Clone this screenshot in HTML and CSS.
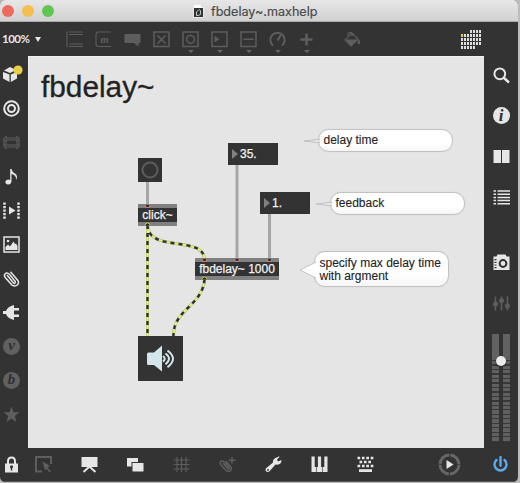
FILE: index.html
```html
<!DOCTYPE html>
<html lang="en">
<head>
<meta charset="utf-8">
<title>fbdelay~.maxhelp</title>
<link rel="stylesheet" href="styles.css">
</head>
<body>
<div class="window">
  <header class="titlebar">
    <div class="lights"><i class="light close"></i><i class="light minimize"></i><i class="light expand"></i></div>
    <div class="doc-title">
      <svg width="11" height="14" viewBox="0 0 11 14"><path d="M0 0H8L11 3V14H0Z" fill="#fafafa" stroke="#bbb" stroke-width=".5"/><path d="M8 0V3H11" fill="#ddd"/><rect x="1" y="4" width="9" height="9" fill="#333"/><path d="M3.500 11.500V8L6 5.500L7.500 6.500V10.500L5 11.500Z" fill="none" stroke="#b9c5c6"/></svg>
      <span>fbdelay~.maxhelp</span>
    </div>
  </header>

  <nav class="toolbar">
    <div class="zoom-level"><span>100%</span><svg width="6" height="5" viewBox="0 0 6 5"><path d="M0 0H6L3 5Z" fill="#e6e6e6"/></svg></div>
    <div class="tools dim">
      <div class="tool"><svg width="17" height="17" viewBox="0 0 17 17"><path d="M1 .5V16M3 1H17M3 3.500H17M3 13H17M3 15.500H17" class="line thin"/></svg></div>
      <div class="tool"><svg width="17" height="17" viewBox="0 0 17 17"><path d="M16 1H3.500Q1 1 1 3.500V13Q1 15.500 3.500 15.500H16" class="line thin"/><text x="9.500" y="11.500" class="glyph-m">m</text></svg></div>
      <div class="tool"><svg width="17" height="17" viewBox="0 0 17 17"><path d="M.5 3H16.500V12H14.500V15.500L10 12H.5Z" class="fill"/></svg></div>
      <div class="tool"><svg width="17" height="17" viewBox="0 0 17 17"><path d="M1 1H16V15.500H1ZM4.500 4.500L12.500 12.500M12.500 4.500L4.500 12.500" class="line"/></svg></div>
      <div class="tool drop"><svg width="17" height="17" viewBox="0 0 17 17"><path d="M1 1H16V15.500H1Z" class="line"/><circle cx="8.500" cy="8.300" r="3.900" class="line"/></svg></div>
      <div class="tool drop"><svg width="17" height="17" viewBox="0 0 17 17"><path d="M1 1H16V15.500H1Z" class="line"/><path d="M3.500 5L8.500 8.300L3.500 11.500Z" class="fill"/></svg></div>
      <div class="tool drop"><svg width="17" height="17" viewBox="0 0 17 17"><path d="M1 1H16V15.500H1ZM3.500 8.300H13.500" class="line"/></svg></div>
      <div class="tool drop"><svg width="17" height="17" viewBox="0 0 17 17"><path d="M4 14.500A7.200 7.200 0 1 1 13 14.500M8.500 9.500L11.800 4" class="line bold"/></svg></div>
      <div class="tool drop"><svg width="17" height="17" viewBox="0 0 17 17"><path d="M8.500 2.500V14.500M2.500 8.500H14.500" class="line heavy"/></svg></div>
    </div>
    <svg class="bucket dim" width="17" height="17" viewBox="0 0 17 17"><path d="M1 9L8 2L14 8L7 15ZM4 5V2.500Q6 .2 8 2.500V5" class="line thin"/><path d="M1.500 8.500H14L7 15ZM14.700 8Q18 13 14.700 13Q12 13 14.700 8" class="fill"/></svg>
    <svg class="calendar" width="21" height="20" viewBox="0 0 21 20">
      <g fill="none" stroke="#dedede" stroke-width="3" stroke-dasharray="2 1"><path d="M9 1.500H21M3 5.500H21M0 9.500H21M0 13.500H21M0 17.500H15"/></g><path d="M0 4H2V7H0Z" fill="#f2d21f"/>
    </svg>
  </nav>

  <aside class="left">
    <div class="cell"><svg class="package" width="22" height="20" viewBox="0 0 22 20"><path d="M1 8L7.500 10.500V18L1 14.500ZM8.800 10.500L15 8V14.500L8.800 18ZM2 6.500L8 3L14 6L8 9Z" fill="#e6e6e6"/><circle cx="16" cy="6" r="4.600" fill="#e8cf45"/></svg></div>
    <div class="cell"><svg width="17" height="17" viewBox="0 0 17 17"><circle cx="8.500" cy="8.500" r="7.300" class="line bold"/><circle cx="8.500" cy="8.500" r="3.500" class="line bold"/></svg></div>
    <div class="cell dim"><svg width="17" height="15" viewBox="0 0 17 15"><path d="M1 3H16V12H1ZM3 5V10M14 5V10M1 5H16M1 10H16M2 1.700H4M13 1.700H15M2 13.300H4M13 13.300H15" class="line thin"/></svg></div>
    <div class="cell"><svg width="17" height="17" viewBox="0 0 17 17"><path d="M7.200 1H8.500Q9 4 12 5.500Q15.500 8 13 12Q13.500 7 8.500 6V13Q8 17 4.500 16.500Q1 15 3 12.500Q5 11 7.200 12Z" fill="#e6e6e6"/></svg></div>
    <div class="cell"><svg width="17" height="17" viewBox="0 0 17 17"><path d="M1.500 .5V17M15.500 .5V17" stroke="#e6e6e6" stroke-width="2.500" stroke-dasharray="2.200 1.300"/><path d="M6 4.500L12.500 8.500L6 12.500Z" fill="#e6e6e6"/></svg></div>
    <div class="cell"><svg width="17" height="17" viewBox="0 0 17 17"><path d="M1 1H16V16H1Z" class="line"/><circle cx="5" cy="5" r="1.300" class="fill"/><path d="M2.500 14V11L5 8.500L7 10.500L10.500 5.500L12 8L13 7.500L14.500 10V14Z" class="fill"/></svg></div>
    <div class="cell"><svg width="17" height="17" viewBox="0 0 17 17"><path d="M4 5L10.500 13Q12.300 14.200 12.300 11.500L6.500 4.200Q3.800 1.800 2 4Q.7 5.500 2.200 7.500L8.800 14.800Q12.300 17 14.500 14.800Q16.500 12.500 14.500 10L7.500 1.800" class="line"/></svg></div>
    <div class="cell"><svg width="17" height="17" viewBox="0 0 17 17"><path d="M0 7H3Q4.500 2.500 11 1V4H16V6.500H11V10.500H16V13H11V16Q4.500 14.500 3 10H0Z" class="fill"/></svg></div>
    <div class="cell"><span class="letter">v</span></div>
    <div class="cell"><span class="letter">b</span></div>
    <div class="cell dim"><svg width="17" height="17" viewBox="0 0 17 17"><path d="M8.500 .5L10.500 6.300H16.500L11.700 10L13.500 16L8.500 12.400L3.500 16L5.300 10L.5 6.300H6.500Z" class="fill"/></svg></div>
  </aside>

  <main class="patcher">
    <svg class="cords" width="456" height="391" viewBox="28 57 456 391">
      <g fill="none" stroke="#a6a6a6" stroke-width="3"><path d="M147.500 182V205M237 165V259M269.500 214V259"/></g>
      <g fill="none" stroke="#a7b46f" stroke-width="3"><path d="M147.500 225V336M147.500 225C148 253 203 235 204.500 259M204.500 279C203 306 173 309 173.500 336"/></g>
      <g fill="none" stroke="#dff47f" stroke-width="2"><path d="M147.500 225V336M147.500 225C148 253 203 235 204.500 259M204.500 279C203 306 173 309 173.500 336"/></g>
      <g fill="none" stroke="#303030" stroke-width="2.400" stroke-dasharray="4 4"><path d="M147.500 225V336M147.500 225C148 253 203 235 204.500 259M204.500 279C203 306 173 309 173.500 336"/></g>
    </svg>
    <h1 class="node heading">fbdelay~</h1>
    <div class="node button"><svg width="24" height="24" viewBox="0 0 24 24"><circle cx="12" cy="12" r="7.500" fill="none" stroke="#5c5c5c" stroke-width="2"/></svg></div>
    <div class="node number delay-value"><svg width="6" height="10" viewBox="0 0 6 10"><path d="M0 0L6 5L0 10Z" fill="#808080"/></svg><span>35.</span></div>
    <div class="node number feedback-value"><svg width="6" height="10" viewBox="0 0 6 10"><path d="M0 0L6 5L0 10Z" fill="#808080"/></svg><span>1.</span></div>
    <div class="node object click">click~</div>
    <div class="node object fbdelay">fbdelay~ 1000</div>
    <div class="node dac"><svg width="45" height="45" viewBox="0 0 45 45"><path d="M9 18Q9 16.500 10.500 16.500H16L24 9.500V35.500L16 29H10.500Q9 29 9 27.500Z" fill="#d2e6eb"/><g fill="none" stroke="#d2e6eb" stroke-width="2"><path d="M25 20Q28.500 22.800 25 25.600M27.500 17.500Q34.500 22.800 27.500 28.200M29.500 14.500Q40.500 22.800 29.500 31.300"/></g></svg></div>
    <svg class="cords ports" width="456" height="391" viewBox="28 57 456 391">
      <g fill="#282828" stroke="#e58a7c" stroke-width="1"><path d="M145 205A2.500 2.500 0 0 0 150 205M202 259A2.500 2.500 0 0 0 207 259M234.500 259A2.500 2.500 0 0 0 239.500 259M267 259A2.500 2.500 0 0 0 272 259"/></g>
      <g fill="#282828" stroke="#bdc951" stroke-width="1"><path d="M145 225.500A2.500 2.500 0 0 1 150 225.500M202 279.500A2.500 2.500 0 0 1 207 279.500"/></g>
    </svg>
    <div class="node bubble delay-note">delay time<svg class="tail" width="16" height="6" viewBox="0 0 16 6"><path d="M16 1.500H13L0 3L13 4.500H16" fill="#e8e8e8" stroke="#c2c2c2"/></svg></div>
    <div class="node bubble feedback-note">feedback<svg class="tail" width="16" height="6" viewBox="0 0 16 6"><path d="M16 1.500H13L0 3L13 4.500H16" fill="#e8e8e8" stroke="#c2c2c2"/></svg></div>
    <div class="node bubble max-note">specify max delay time<br>with argment<svg class="tail" width="17" height="16" viewBox="0 0 17 16"><path d="M17 .5H16L1 8L16 15.500H17" fill="#fff" stroke="#c2c2c2"/></svg></div>
  </main>

  <aside class="right">
    <div class="cell"><svg width="17" height="17" viewBox="0 0 17 17"><circle cx="6.800" cy="6.800" r="5.400" class="line bold"/><path d="M10.500 10.500L16 15.500" class="line heavy"/></svg></div>
    <div class="cell"><span class="letter info">i</span></div>
    <div class="cell"><svg width="17" height="17" viewBox="0 0 17 17"><path d="M.5 2H8V15H.5ZM9 2H16.500V15H9Z" class="fill"/></svg></div>
    <div class="cell"><svg width="17" height="17" viewBox="0 0 17 17"><path d="M.5 2H3M4.500 2H17M.5 5.200H3M4.500 5.200H17M.5 8.400H3M4.500 8.400H17M.5 11.600H3M4.500 11.600H17M.5 14.800H3M4.500 14.800H17" class="line"/></svg></div>
    <div class="cell camera"><svg width="17" height="17" viewBox="0 0 17 17"><path d="M3.500 2.500L4.500 .5H12.500L13.500 2.500H16.500V16H.5V2.500Z" class="fill"/><circle cx="10" cy="9.500" r="3.400" fill="#e6e6e6" stroke="#303030" stroke-width="2"/><path d="M2.500 5V15" stroke="#303030" stroke-width="2" stroke-dasharray="1.200 1.500"/></svg></div>
    <div class="cell dim"><svg width="17" height="17" viewBox="0 0 17 17"><path d="M2.500 1.500V15.500M8.500 1.500V15.500M14.500 1.500V15.500" class="line"/><circle cx="2.500" cy="9" r="2.500" class="fill"/><circle cx="8.500" cy="5.500" r="2.500" class="fill"/><circle cx="14.500" cy="11" r="2.500" class="fill"/></svg></div>
    <div class="meter"><i class="channel"></i><i class="channel"></i><i class="knob"></i></div>
  </aside>

  <footer class="bottombar">
    <div class="cell lock"><svg width="15" height="18" viewBox="0 0 15 18"><path d="M4 8V5.500Q4 1.500 7.500 1.500T11 5.500V8" class="line bold"/><path d="M1 7.500H14V16.500H1Z" class="fill"/><circle cx="7.500" cy="10.700" r="1.500" fill="#303030"/><path d="M6.800 11H8.200V14.500H6.800Z" fill="#303030"/></svg></div>
    <div class="slots">
      <div class="slot dim"><svg width="17" height="17" viewBox="0 0 17 17"><path d="M7 15.500H1V1H16V8" class="line bold"/><path d="M7.500 5.500L15 10L12.500 11.500L16 15.500L14.800 16.500L11.500 12.700L10 14.500Z" class="fill"/></svg></div>
      <div class="slot"><svg width="17" height="17" viewBox="0 0 17 17"><path d="M.5 1H16.500V11H.5Z" class="fill"/><path d="M8.500 10.500L2.500 16M8.500 10.500L14.500 16" class="line bold"/></svg></div>
      <div class="slot"><svg width="17" height="17" viewBox="0 0 17 17"><path d="M0 2H11V6H4.500V10.500H0Z" class="fill"/><path d="M5.500 7H16.500V15.500H5.500Z" class="fill"/></svg></div>
      <div class="slot dim"><svg width="17" height="17" viewBox="0 0 17 17"><path d="M4 1V16M8.500 1V16M13 1V16M.5 4H16.500M.5 8.500H16.500M.5 13H16.500" class="line thin"/></svg></div>
      <div class="slot dim"><svg width="17" height="17" viewBox="0 0 17 17"><path d="M4 7L9 13Q10.500 13.500 10 11.500L5.500 6Q3 4 1.500 6Q.5 7.500 2 9L7 14.500Q9.500 16.500 11.700 14.500Q13 12.500 11.500 10.500L7 5.200M13 1V7.500M9.700 4.200H16.500" class="line"/></svg></div>
      <div class="slot"><svg width="17" height="17" viewBox="0 0 17 17"><path d="M11.500 1.500Q15 0 14.500 1L12 3.500L13 5.500L16.500 4Q16.500 9.500 10.500 8.500L5 14.700Q3 17 1 15.200Q-.5 13 2 11.500L8 6.500Q7.500 3 11.500 1.500Z" class="fill"/><circle cx="3" cy="14" r=".9" fill="#303030"/></svg></div>
      <div class="slot"><svg width="17" height="17" viewBox="0 0 17 17"><path d="M.5 .5H3.700V11H5.400V16H.5ZM6.900 .5H10.100V11H11.100V16H6V11H6.900ZM13.300 .5H16.500V16H11.700V11H13.300Z" class="fill"/></svg></div>
      <div class="slot"><svg width="17" height="17" viewBox="0 0 17 17"><path d="M.5 2H17M.5 10H17" stroke="#e6e6e6" stroke-width="2.600" stroke-dasharray="2.700 1.700"/><path d="M2.500 6H15" stroke="#e6e6e6" stroke-width="2.600" stroke-dasharray="2.700 1.700"/><path d="M2 13.200H15V16H2Z" class="fill"/></svg></div>
    </div>
    <div class="play"><svg width="23" height="23" viewBox="0 0 23 23"><circle cx="11.500" cy="11.500" r="9.500" fill="none" stroke="#666" stroke-width="3" stroke-dasharray="13.900 1.020" stroke-dashoffset="-.5"/><path d="M8.500 7L15.500 11.500L8.500 16Z" class="fill"/></svg></div>
    <div class="power"><svg width="17" height="17" viewBox="0 0 17 17"><path d="M4.500 4A6 6 0 1 0 12.500 4M8.500 1V9.500" fill="none" stroke="#5aabee" stroke-width="2.400" stroke-linecap="round"/></svg></div>
  </footer>
</div>
</body>
</html>
```
FILE: styles.css
```css
* { box-sizing: border-box; }
body { margin: 0; background: #bcbcbc; font-family: "Liberation Sans", Arial, sans-serif; overflow: hidden; }
svg { display: block; flex: none; }
.window {
  width: 518px; height: 482px; display: grid;
  grid-template: 22px 34px 392px 34px / 28px 456px 34px;
  background: #333; border-radius: 5px; overflow: hidden;
}
.titlebar {
  grid-column: 1 / -1; display: flex; align-items: center; padding-top: 1px;
  background: linear-gradient(#e7e7e7, #d1d1d1); border-bottom: 1px solid #aaa;
}
.lights { display: flex; gap: 8px; width: 193px; padding-left: 2px; }
.light { width: 12px; height: 12px; border-radius: 50%; }
.close { background: #ed6a5e; }
.minimize { background: #f5bf4f; }
.expand { background: #61c554; }
.doc-title { display: flex; align-items: center; gap: 7px; color: #4b4b4b; font: 12.6px/20px Inter, sans-serif; -webkit-text-stroke: .2px #4b4b4b; }
.doc-title span { padding-top: 2px; }

.toolbar { grid-column: 1 / -1; display: flex; align-items: center; }
.zoom-level { width: 60px; padding-left: 2px; display: flex; align-items: center; gap: 6px; color: #e6e6e6; font: bold 11.5px/16px Lato, sans-serif; }
.zoom-level span { letter-spacing: -.5px; }
.tools { display: flex; }
.tool { width: 29px; height: 34px; padding-top: 9px; display: grid; justify-content: center; align-content: start; gap: 2px; }
.drop::after { content: ""; justify-self: center; border: 3px solid transparent; border-top-color: #666; border-bottom: 0; margin-top: -1px; }
.drop { row-gap: 0; grid-template-rows: 17px 5px; align-items: end; }
.bucket { margin-left: 23px; }
.calendar { margin: 1px 0 0 100px; }

.line { fill: none; stroke: #e6e6e6; stroke-width: 1.5; }
.thin { stroke-width: 1.1; }
.bold { stroke-width: 2; }
.heavy { stroke-width: 2.5; }
.fill { fill: #e6e6e6; }
.dim .line { stroke: #5e5e5e; }
.dim .fill { fill: #5e5e5e; }
.glyph-m { font: italic bold 10.5px "Liberation Serif", serif; text-anchor: middle; fill: #5e5e5e; }

.left { padding-top: 1px; }
.left .cell { width: 23px; height: 34px; display: grid; place-items: center; }
.package { margin-left: 2px; justify-self: start; }
.letter {
  width: 17px; height: 17px; border-radius: 50%; background: #606060; color: #303030;
  font: italic bold 15px/15px "Liberation Serif", serif; text-align: center;
}
.info { background: #e6e6e6; font-size: 17px; line-height: 17px; }

.patcher { position: relative; background: #e5e5e5; border-top: 1px solid #f2f2f2; border-left: 1px solid #eee; }
.cords { position: absolute; left: -1px; top: 0; }
.node { position: absolute; }
.heading { left: 12px; top: 13px; margin: 0; font-size: 29.8px; font-weight: 400; line-height: 34px; color: #222; -webkit-text-stroke: .3px #222; }
.button { left: 109px; top: 101px; width: 24px; height: 24px; background: #333; }
.number { width: 50px; height: 22px; padding-left: 4px; display: flex; align-items: center; gap: 2px; background: #333; color: #f2f2f2; font-size: 12px; -webkit-text-stroke: .25px #f2f2f2; }
.delay-value { left: 199px; top: 86px; }
.feedback-value { left: 231px; top: 135px; }
.object { height: 22px; border: solid #808080; border-width: 4px 0; background: #333; color: #f2f2f2; font-size: 12px; line-height: 14px; text-align: center; -webkit-text-stroke: .25px #f2f2f2; }
.click { left: 109px; top: 147px; width: 39px; }
.fbdelay { left: 166px; top: 201px; width: 84px; }
.dac { left: 109px; top: 279px; width: 45px; height: 45px; background: #333; }
.bubble { border: 1px solid #c2c2c2; border-radius: 11px; background: linear-gradient(#fff 65%, #f5f5f5); color: #222; font-size: 12px; line-height: 13px; padding: 4px 4.5px; box-shadow: 0 0 1px #c8c8c8; -webkit-text-stroke: .1px #222; }
.tail { position: absolute; left: -15px; top: 8px; }
.delay-note { left: 289px; top: 72px; width: 135px; height: 23px; }
.feedback-note { left: 301px; top: 135px; width: 135px; height: 23px; }
.max-note { left: 285px; top: 194px; width: 135px; height: 36px; padding-top: 5px; white-space: nowrap; }
.max-note .tail { left: -16px; top: 10px; }

.right { display: flex; flex-direction: column; }
.right .cell { height: 41px; display: grid; place-items: center; }
.right .cell:first-child { height: 39px; }
.camera { margin-top: 24px; }
.meter { position: relative; display: flex; justify-content: center; gap: 4px; margin-top: 10px; }
.channel { width: 7px; height: 108px; background: linear-gradient(#626262 23px, transparent 23px), repeating-linear-gradient(#606060 0 3px, #383838 3px 4.5px); }
.knob { position: absolute; left: 12px; top: 22px; width: 10px; height: 10px; border-radius: 50%; background: #ececec; box-shadow: 0 1px 2px #222; }

.bottombar { grid-column: 1 / -1; display: flex; align-items: center; border-bottom: 1px solid #555; }
.lock { width: 20px; padding-left: 4px; }
.slots { display: flex; }
.slot { width: 46px; display: grid; place-items: center; }
.play { margin-left: 50px; }
.power { margin-left: 31px; }
```
